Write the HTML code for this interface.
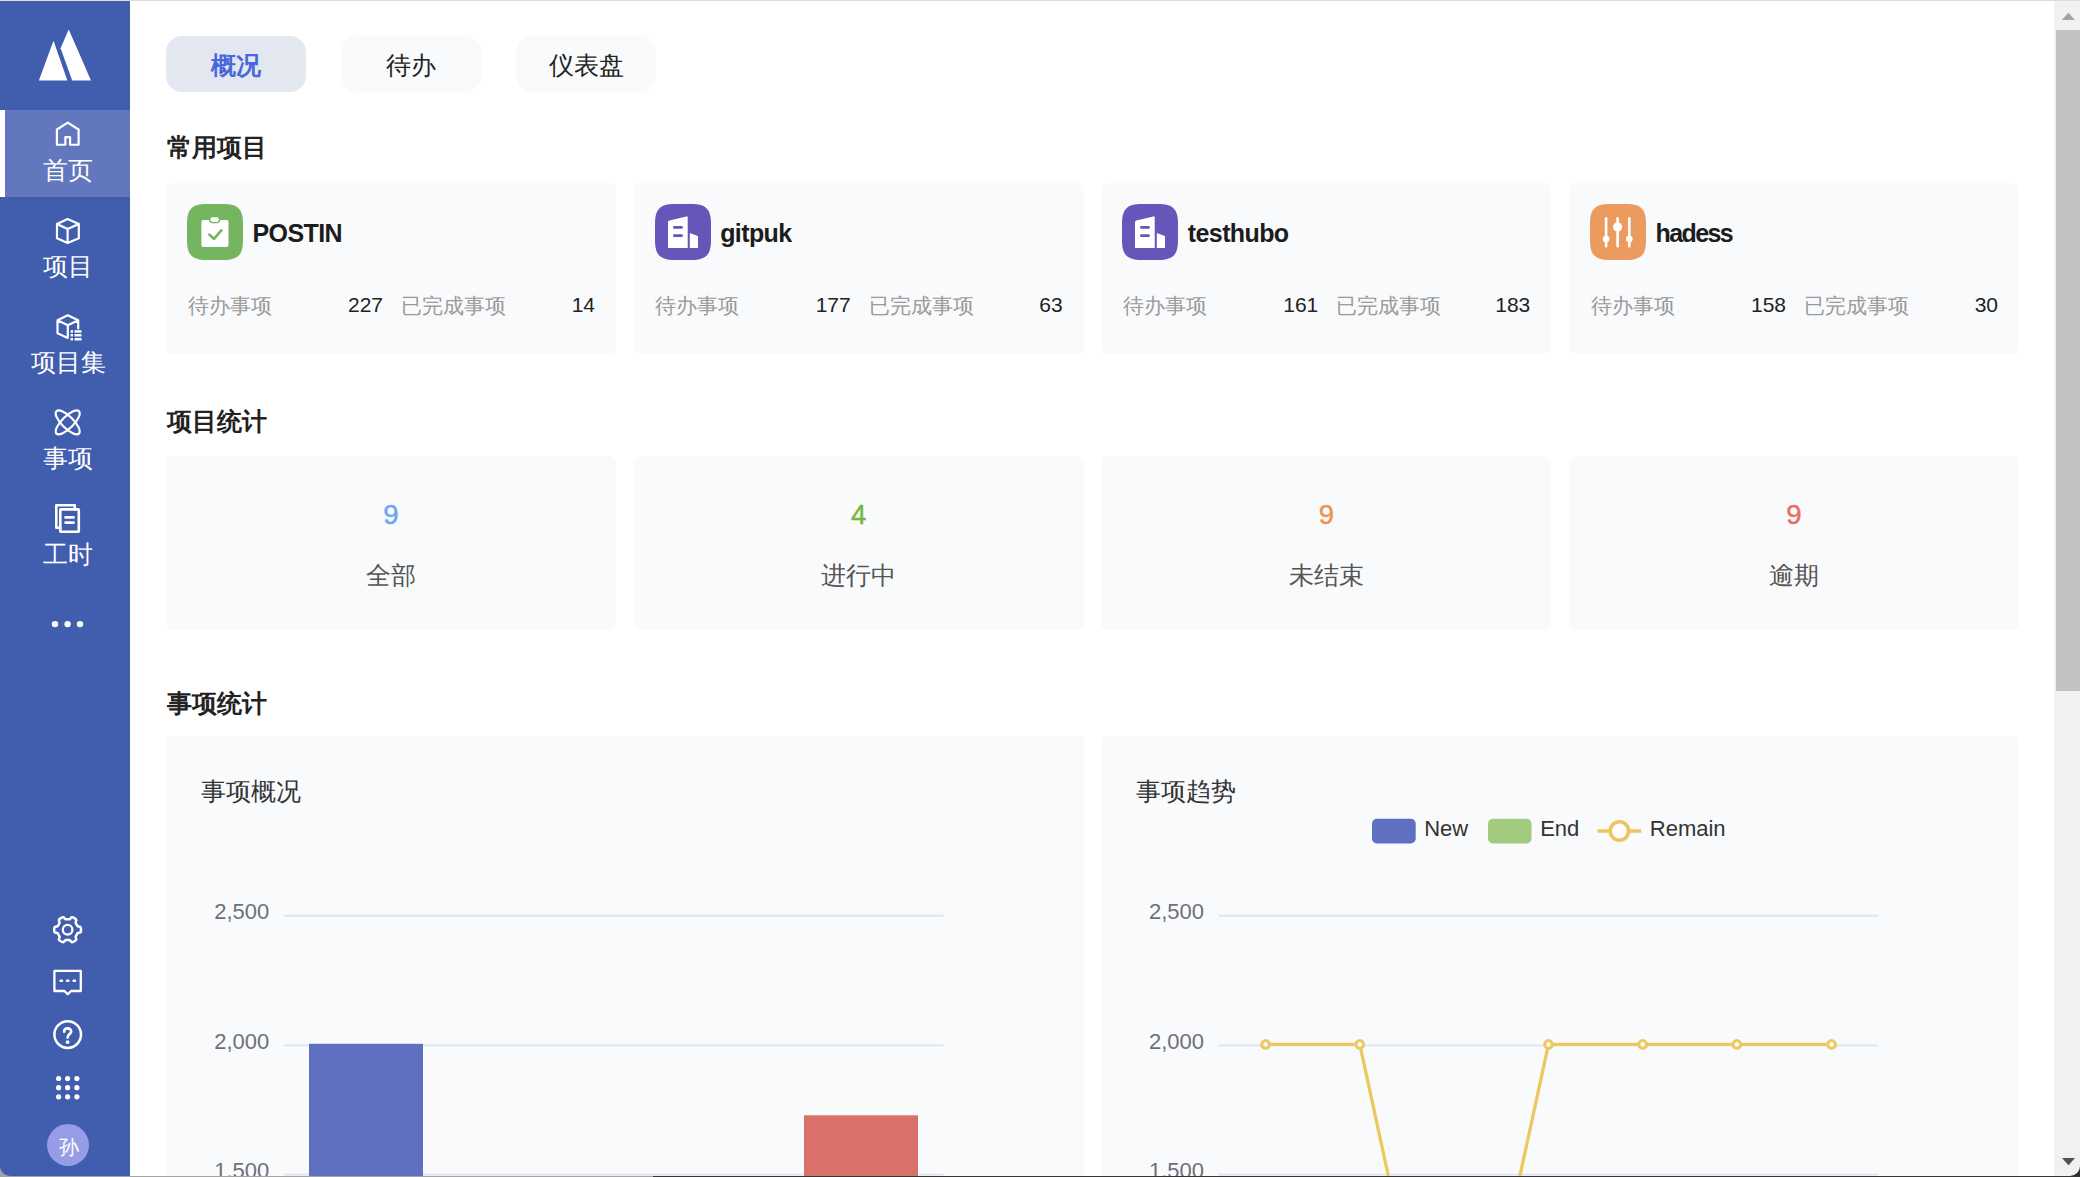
<!DOCTYPE html>
<html><head><meta charset="utf-8">
<style>
*{margin:0;padding:0;box-sizing:border-box}
html,body{width:2080px;height:1177px;overflow:hidden;background:#fff;font-family:"Liberation Sans",sans-serif;color:#222}
.abs{position:absolute}
#top{left:0;top:0;width:2080px;height:1px;background:#dcdcdc}
#side{left:0;top:1px;width:130px;height:1175px;background:#415dae;border-bottom-left-radius:10px}
.nav{position:absolute;left:0;width:130px;color:#fff;text-align:center}
.nav svg{position:absolute;left:55px;width:25px;height:25px}
.nav .t{position:absolute;left:0;width:130px;font-size:24px;line-height:24px;text-align:center}
#active{left:0;top:110px;width:130px;height:87px;background:#6277bd}
#activebar{left:0;top:110px;width:5px;height:87px;background:#fff}
.tab{position:absolute;top:36px;width:140px;height:56px;border-radius:16px;background:#f9fafc;font-size:25px;line-height:58px;text-align:center;color:#222}
.tab.on{background:#e3e7ef;color:#4767dc;font-weight:bold}
.h{position:absolute;left:167px;font-size:24.6px;font-weight:bold;line-height:24.6px;color:#222}
.card{position:absolute;width:450px;background:#f9fafc;border-radius:7px}
.pc{top:183px;height:171px}
.pic{position:absolute;left:21px;top:21px;width:56px;height:56px}
.pic svg{display:block}
.pname{position:absolute;left:86.5px;top:37.5px;font-size:25px;font-weight:bold;line-height:25px;color:#1c1c1c;letter-spacing:-0.6px;white-space:nowrap}
.lbl{position:absolute;top:111.6px;font-size:21px;line-height:21px;color:#999;white-space:nowrap}
.num{position:absolute;top:111.4px;width:117px;font-size:21px;line-height:21px;color:#222;text-align:right}
.sc{top:456px;height:174px}
.sn{position:absolute;left:0;width:450px;top:44.6px;font-size:27.5px;line-height:27.5px;text-align:center;-webkit-text-stroke:0.45px currentColor}
.sl{position:absolute;left:0;width:450px;top:106.5px;font-size:25px;line-height:25px;text-align:center;color:#555}
.cc{top:736px;height:460px}
.ct{position:absolute;left:35px;top:42.75px;font-size:25px;line-height:25px;color:#333}
#sb{left:2054px;top:1px;width:26px;height:1175px;background:#f1f1f1;border-bottom-right-radius:10px}
#thumb{left:2056px;top:30px;width:24px;height:661px;background:#c1c1c1}
#bot{left:0;top:1176px;width:2080px;height:1px;background:linear-gradient(90deg,#a4a4a4 0,#a4a4a4 653px,#363636 653px)}
#blc{left:0;top:1157px;width:20px;height:20px;background:#a4a4a4}
#brc{left:2060px;top:1157px;width:20px;height:20px;background:#2e2e2e}
.nt{position:absolute;left:3px;width:130px;font-size:25px;line-height:25px;text-align:center;color:#fff}
.av{position:absolute;left:47.5px;top:1125.5px;width:42px;height:42px;font-size:20px;line-height:42px;text-align:center;color:#fff}
</style></head><body>
<div id="top" class="abs"></div>
<div id="blc" class="abs"></div>
<div id="side" class="abs"></div>
<div id="active" class="abs"></div>
<div id="activebar" class="abs"></div>
<svg class="abs" style="left:0;top:0" width="130" height="1177" viewBox="0 0 130 1177">
<g fill="#fff">
<path d="M38.9 80.6 L53.5 40.7 L67.4 80.6 Z"/>
<path d="M68.7 29.4 L91 80.6 L72.2 80.6 L60.6 48.2 Z"/>
</g>
<g fill="none" stroke="#fff" stroke-width="2.2" stroke-linejoin="round" stroke-linecap="round">
<path d="M65.35 144.75 H56.9 V129.5 L67.75 122.6 L78.6 129.5 V144.75 H70.05 V137.15 H65.35 Z"/>
<path d="M67.6 219 L78.8 224 V238.2 L67.6 243 L57 238.2 V224 Z M57 224 L67.6 229 L78.8 224 M67.6 229 V243"/>
<path d="M78.2 328.5 V320.3 L67.8 315.3 L57.5 320.3 V333.3 L67.8 337.9 V325.3 M57.5 320.3 L67.8 325.3 L78.2 320.3"/>
<ellipse cx="67.7" cy="422.4" rx="15.9" ry="5.9" transform="rotate(45 67.7 422.4)"/>
<ellipse cx="67.7" cy="422.4" rx="15.9" ry="5.9" transform="rotate(-45 67.7 422.4)"/>
</g>
<g fill="#fff">
<rect x="70.6" y="330.2" width="2.4" height="2.5"/><rect x="74.5" y="330.2" width="7" height="2.5"/>
<rect x="70.6" y="334.0" width="2.4" height="2.5"/><rect x="74.5" y="334.0" width="7" height="2.5"/>
<rect x="70.6" y="338.0" width="2.4" height="2.5"/><rect x="74.5" y="338.0" width="7" height="2.5"/>
</g>
<g fill="none" stroke="#fff" stroke-width="2.6" stroke-linejoin="round" stroke-linecap="round">
<path d="M60.3 527.7 H56.3 V505.3 H74.8 V509.4"/>
<rect x="60.3" y="509.4" width="18.5" height="22.3" rx="0.5"/>
<path d="M65.5 517.4 H73.6 M65.5 522.6 H73.6"/>
</g>
<g fill="#fff"><circle cx="55" cy="624.1" r="3.2"/><circle cx="67.6" cy="624.1" r="3.2"/><circle cx="80" cy="624.1" r="3.2"/></g>
<g fill="none" stroke="#fff" stroke-width="2.3" stroke-linejoin="round" stroke-linecap="round">
<path stroke-width="2.5" d="M81.00 929.70 L80.99 930.17 L80.96 930.63 L80.91 931.10 L80.82 931.56 L80.66 932.00 L80.32 932.40 L79.59 932.69 L78.60 932.85 L77.87 933.04 L77.50 933.30 L77.29 933.61 L77.12 933.94 L76.95 934.26 L76.78 934.58 L76.61 934.90 L76.42 935.21 L76.23 935.52 L76.03 935.82 L75.83 936.13 L75.67 936.47 L75.63 936.93 L75.83 937.65 L76.18 938.59 L76.30 939.36 L76.13 939.86 L75.82 940.22 L75.47 940.53 L75.09 940.80 L74.70 941.06 L74.30 941.30 L73.89 941.53 L73.47 941.74 L73.04 941.93 L72.60 942.08 L72.14 942.16 L71.62 942.06 L71.01 941.58 L70.37 940.80 L69.85 940.26 L69.43 940.08 L69.05 940.04 L68.69 940.06 L68.33 940.08 L67.96 940.09 L67.60 940.10 L67.24 940.09 L66.87 940.08 L66.51 940.06 L66.15 940.04 L65.77 940.08 L65.35 940.26 L64.83 940.80 L64.19 941.58 L63.58 942.06 L63.06 942.16 L62.60 942.08 L62.16 941.93 L61.73 941.74 L61.31 941.53 L60.90 941.30 L60.50 941.06 L60.11 940.80 L59.73 940.53 L59.38 940.22 L59.07 939.86 L58.90 939.36 L59.02 938.59 L59.37 937.65 L59.57 936.93 L59.53 936.47 L59.37 936.13 L59.17 935.82 L58.97 935.52 L58.78 935.21 L58.59 934.90 L58.42 934.58 L58.25 934.26 L58.08 933.94 L57.91 933.61 L57.70 933.30 L57.33 933.04 L56.60 932.85 L55.61 932.69 L54.88 932.40 L54.54 932.00 L54.38 931.56 L54.29 931.10 L54.24 930.63 L54.21 930.17 L54.20 929.70 L54.21 929.23 L54.24 928.77 L54.29 928.30 L54.38 927.84 L54.54 927.40 L54.88 927.00 L55.61 926.71 L56.60 926.55 L57.33 926.36 L57.70 926.10 L57.91 925.79 L58.08 925.46 L58.25 925.14 L58.42 924.82 L58.59 924.50 L58.78 924.19 L58.97 923.88 L59.17 923.58 L59.37 923.27 L59.53 922.93 L59.57 922.47 L59.37 921.75 L59.02 920.81 L58.90 920.04 L59.07 919.54 L59.38 919.18 L59.73 918.87 L60.11 918.60 L60.50 918.34 L60.90 918.10 L61.31 917.87 L61.73 917.66 L62.16 917.47 L62.60 917.32 L63.06 917.24 L63.58 917.34 L64.19 917.82 L64.83 918.60 L65.35 919.14 L65.77 919.32 L66.15 919.36 L66.51 919.34 L66.87 919.32 L67.24 919.31 L67.60 919.30 L67.96 919.31 L68.33 919.32 L68.69 919.34 L69.05 919.36 L69.43 919.32 L69.85 919.14 L70.37 918.60 L71.01 917.82 L71.62 917.34 L72.14 917.24 L72.60 917.32 L73.04 917.47 L73.47 917.66 L73.89 917.87 L74.30 918.10 L74.70 918.34 L75.09 918.60 L75.47 918.87 L75.82 919.18 L76.13 919.54 L76.30 920.04 L76.18 920.81 L75.83 921.75 L75.63 922.47 L75.67 922.93 L75.83 923.27 L76.03 923.58 L76.23 923.88 L76.42 924.19 L76.61 924.50 L76.78 924.82 L76.95 925.14 L77.12 925.46 L77.29 925.79 L77.50 926.10 L77.87 926.36 L78.60 926.55 L79.59 926.71 L80.32 927.00 L80.66 927.40 L80.82 927.84 L80.91 928.30 L80.96 928.77 L80.99 929.23 Z"/>
<circle cx="67.6" cy="929.7" r="4.8"/>
<path d="M54.4 970.9 H80.8 V991 H71 L67.7 994.3 L64.4 991 H54.4 Z"/>
<circle cx="67.7" cy="1034.6" r="13.3" stroke-width="2.5"/>
<path stroke-width="2.6" d="M64.1 1031.8 C64.1 1029.6 65.6 1028.4 67.6 1028.4 C69.7 1028.4 71.2 1029.8 71.2 1031.5 C71.2 1033.9 67.6 1034.4 67.6 1037.6"/>
</g>
<g fill="#fff">
<rect x="59.4" y="979.5" width="3.8" height="2.5" rx="1.2"/><rect x="65.8" y="979.5" width="3.8" height="2.5" rx="1.2"/><rect x="72.4" y="979.5" width="3.8" height="2.5" rx="1.2"/>
<circle cx="67.6" cy="1042.1" r="1.9"/>
<circle cx="58.6" cy="1078.5" r="2.6"/><circle cx="58.6" cy="1087.7" r="2.6"/><circle cx="58.6" cy="1096.8" r="2.6"/><circle cx="67.6" cy="1078.5" r="2.6"/><circle cx="67.6" cy="1087.7" r="2.6"/><circle cx="67.6" cy="1096.8" r="2.6"/><circle cx="76.9" cy="1078.5" r="2.6"/><circle cx="76.9" cy="1087.7" r="2.6"/><circle cx="76.9" cy="1096.8" r="2.6"/>
</g>
<circle cx="68" cy="1145" r="21" fill="#969ce6"/>
</svg>
<div class="nt" style="top:158px">首页</div>
<div class="nt" style="top:254px">项目</div>
<div class="nt" style="top:350px">项目集</div>
<div class="nt" style="top:446px">事项</div>
<div class="nt" style="top:542px">工时</div>
<div class="av">孙</div>

<div class="tab on" style="left:166px">概况</div>
<div class="tab" style="left:341px">待办</div>
<div class="tab" style="left:516px">仪表盘</div>

<div class="h" style="top:135.6px">常用项目</div>
<div class="h" style="top:409.7px">项目统计</div>
<div class="h" style="top:691.6px">事项统计</div>
<div class="card pc" style="left:166.0px">
<div class="pic"><svg width="56" height="56" viewBox="0 0 56 56"><path d="M0 20 C0 5 5 0 20 0 H36 C51 0 56 5 56 20 V36 C56 51 51 56 36 56 H20 C5 56 0 51 0 36 Z" fill="#75b55f"/><rect x="14.4" y="16" width="27.1" height="27" rx="2" fill="#fff"/><rect x="22.6" y="12.6" width="10" height="6" rx="3" fill="#fff" stroke="#75b55f" stroke-width="1.4"/><path d="M22.3 30.6 L27 34.8 L34.3 26.3" fill="none" stroke="#75b55f" stroke-width="2.6" stroke-linecap="round" stroke-linejoin="round"/></svg></div>
<div class="pname">POSTIN</div>
<div class="lbl" style="left:21.5px">待办事项</div><div class="num" style="left:100px">227</div>
<div class="lbl" style="left:235px">已完成事项</div><div class="num" style="left:312px">14</div>
</div>
<div class="card pc" style="left:633.7px">
<div class="pic"><svg width="56" height="56" viewBox="0 0 56 56"><path d="M0 20 C0 5 5 0 20 0 H36 C51 0 56 5 56 20 V36 C56 51 51 56 36 56 H20 C5 56 0 51 0 36 Z" fill="#6457b9"/><path d="M13 18.2 Q13 16.8 14.4 16.5 L31.4 12.4 Q32.7 12.1 32.7 13.5 V43.9 H13 Z" fill="#fff"/><path d="M34.8 29 L42.2 31.8 Q43 32.1 43 33 V43.9 H34.8 Z" fill="#fff"/><rect x="18" y="22" width="9.9" height="2.8" rx="1.4" fill="#6457b9"/><rect x="18" y="30.3" width="9.9" height="2.8" rx="1.4" fill="#6457b9"/></svg></div>
<div class="pname">gitpuk</div>
<div class="lbl" style="left:21.5px">待办事项</div><div class="num" style="left:100px">177</div>
<div class="lbl" style="left:235px">已完成事项</div><div class="num" style="left:312px">63</div>
</div>
<div class="card pc" style="left:1101.3px">
<div class="pic"><svg width="56" height="56" viewBox="0 0 56 56"><path d="M0 20 C0 5 5 0 20 0 H36 C51 0 56 5 56 20 V36 C56 51 51 56 36 56 H20 C5 56 0 51 0 36 Z" fill="#6457b9"/><path d="M13 18.2 Q13 16.8 14.4 16.5 L31.4 12.4 Q32.7 12.1 32.7 13.5 V43.9 H13 Z" fill="#fff"/><path d="M34.8 29 L42.2 31.8 Q43 32.1 43 33 V43.9 H34.8 Z" fill="#fff"/><rect x="18" y="22" width="9.9" height="2.8" rx="1.4" fill="#6457b9"/><rect x="18" y="30.3" width="9.9" height="2.8" rx="1.4" fill="#6457b9"/></svg></div>
<div class="pname">testhubo</div>
<div class="lbl" style="left:21.5px">待办事项</div><div class="num" style="left:100px">161</div>
<div class="lbl" style="left:235px">已完成事项</div><div class="num" style="left:312px">183</div>
</div>
<div class="card pc" style="left:1569.0px">
<div class="pic"><svg width="56" height="56" viewBox="0 0 56 56"><path d="M0 20 C0 5 5 0 20 0 H36 C51 0 56 5 56 20 V36 C56 51 51 56 36 56 H20 C5 56 0 51 0 36 Z" fill="#eb9b5d"/><g stroke="#fff" stroke-width="2.6" stroke-linecap="round"><path d="M16.1 14.2 V42.2 M27.6 14.2 V42.2 M39.3 14.2 V42.2"/></g><g fill="#fff"><circle cx="16.1" cy="35" r="3.3"/><circle cx="27.6" cy="22.9" r="4.6"/><circle cx="39.3" cy="35" r="3.3"/></g></svg></div>
<div class="pname" style="letter-spacing:-1.6px">hadess</div>
<div class="lbl" style="left:21.5px">待办事项</div><div class="num" style="left:100px">158</div>
<div class="lbl" style="left:235px">已完成事项</div><div class="num" style="left:312px">30</div>
</div>
<div class="card sc" style="left:166.0px"><div class="sn" style="color:#6fa6f2">9</div><div class="sl">全部</div></div>
<div class="card sc" style="left:633.7px"><div class="sn" style="color:#76b83f">4</div><div class="sl">进行中</div></div>
<div class="card sc" style="left:1101.3px"><div class="sn" style="color:#ea9550">9</div><div class="sl">未结束</div></div>
<div class="card sc" style="left:1569.0px"><div class="sn" style="color:#e2725f">9</div><div class="sl">逾期</div></div>
<div class="card cc" style="left:166px;width:918px;border-radius:0">
<div class="ct">事项概况</div>
</div>
<div class="card cc" style="left:1101px;width:918px">
<div class="ct">事项趋势</div>
</div>
<svg class="abs" style="left:0;top:0" width="2080" height="1177" viewBox="0 0 2080 1177">
<g fill="#e0e6f1">
<rect x="283.5" y="914.7" width="660.3" height="2"/><rect x="283.5" y="1044.4" width="660.3" height="2"/><rect x="283.5" y="1173.6" width="660.3" height="2"/>
<rect x="1218.7" y="914.7" width="659.5" height="2"/><rect x="1218.7" y="1044.4" width="659.5" height="2"/><rect x="1218.7" y="1173.6" width="659.5" height="2"/>
</g>
<rect x="309" y="1043.8" width="114" height="140" fill="#5f70c1"/>
<rect x="804" y="1115.3" width="114" height="70" fill="#d9706a"/>
<g font-family="Liberation Sans" font-size="22" fill="#6e7079" text-anchor="end">
<text x="269.3" y="918.8">2,500</text><text x="269.3" y="1048.5">2,000</text><text x="269.3" y="1178.2">1,500</text>
<text x="1204" y="918.8">2,500</text><text x="1204" y="1048.5">2,000</text><text x="1204" y="1178.2">1,500</text>
</g>
<rect x="1372" y="818.7" width="43.7" height="24.7" rx="5" fill="#5f70c1"/>
<rect x="1488" y="818.7" width="43.5" height="24.7" rx="5" fill="#a2cb7d"/>
<path d="M1597.5 831 H1641.3" stroke="#edc462" stroke-width="3.6"/>
<circle cx="1619.4" cy="831" r="9.2" fill="#fff" stroke="#edc462" stroke-width="3.6"/>
<g font-family="Liberation Sans" font-size="22" fill="#333">
<text x="1424.2" y="836">New</text><text x="1540.2" y="836">End</text><text x="1649.8" y="836">Remain</text>
</g>
<path d="M1265.6 1044.4 L1359.8 1044.4 L1454 1479 L1548.5 1044.4 L1642.7 1044.4 L1736.9 1044.4 L1831.6 1044.4" fill="none" stroke="#edc85f" stroke-width="3.3" stroke-linejoin="round"/>
<g fill="#fafbfc" stroke="#edc85f" stroke-width="3">
<circle cx="1265.6" cy="1044.4" r="3.8"/><circle cx="1359.8" cy="1044.4" r="3.8"/><circle cx="1548.5" cy="1044.4" r="3.8"/><circle cx="1642.7" cy="1044.4" r="3.8"/><circle cx="1736.9" cy="1044.4" r="3.8"/><circle cx="1831.6" cy="1044.4" r="3.8"/>
</g>
</svg>
<div id="brc" class="abs"></div>
<div id="sb" class="abs"></div>
<svg class="abs" style="left:2054px;top:0" width="26" height="1177"><path d="M7.8 20 L14.4 12.7 L21 20 Z" fill="#a3a3a3"/><path d="M8 1158 L21 1158 L14.5 1165.2 Z" fill="#505050"/></svg>
<div id="thumb" class="abs"></div>
<div id="bot" class="abs"></div>
</body></html>
